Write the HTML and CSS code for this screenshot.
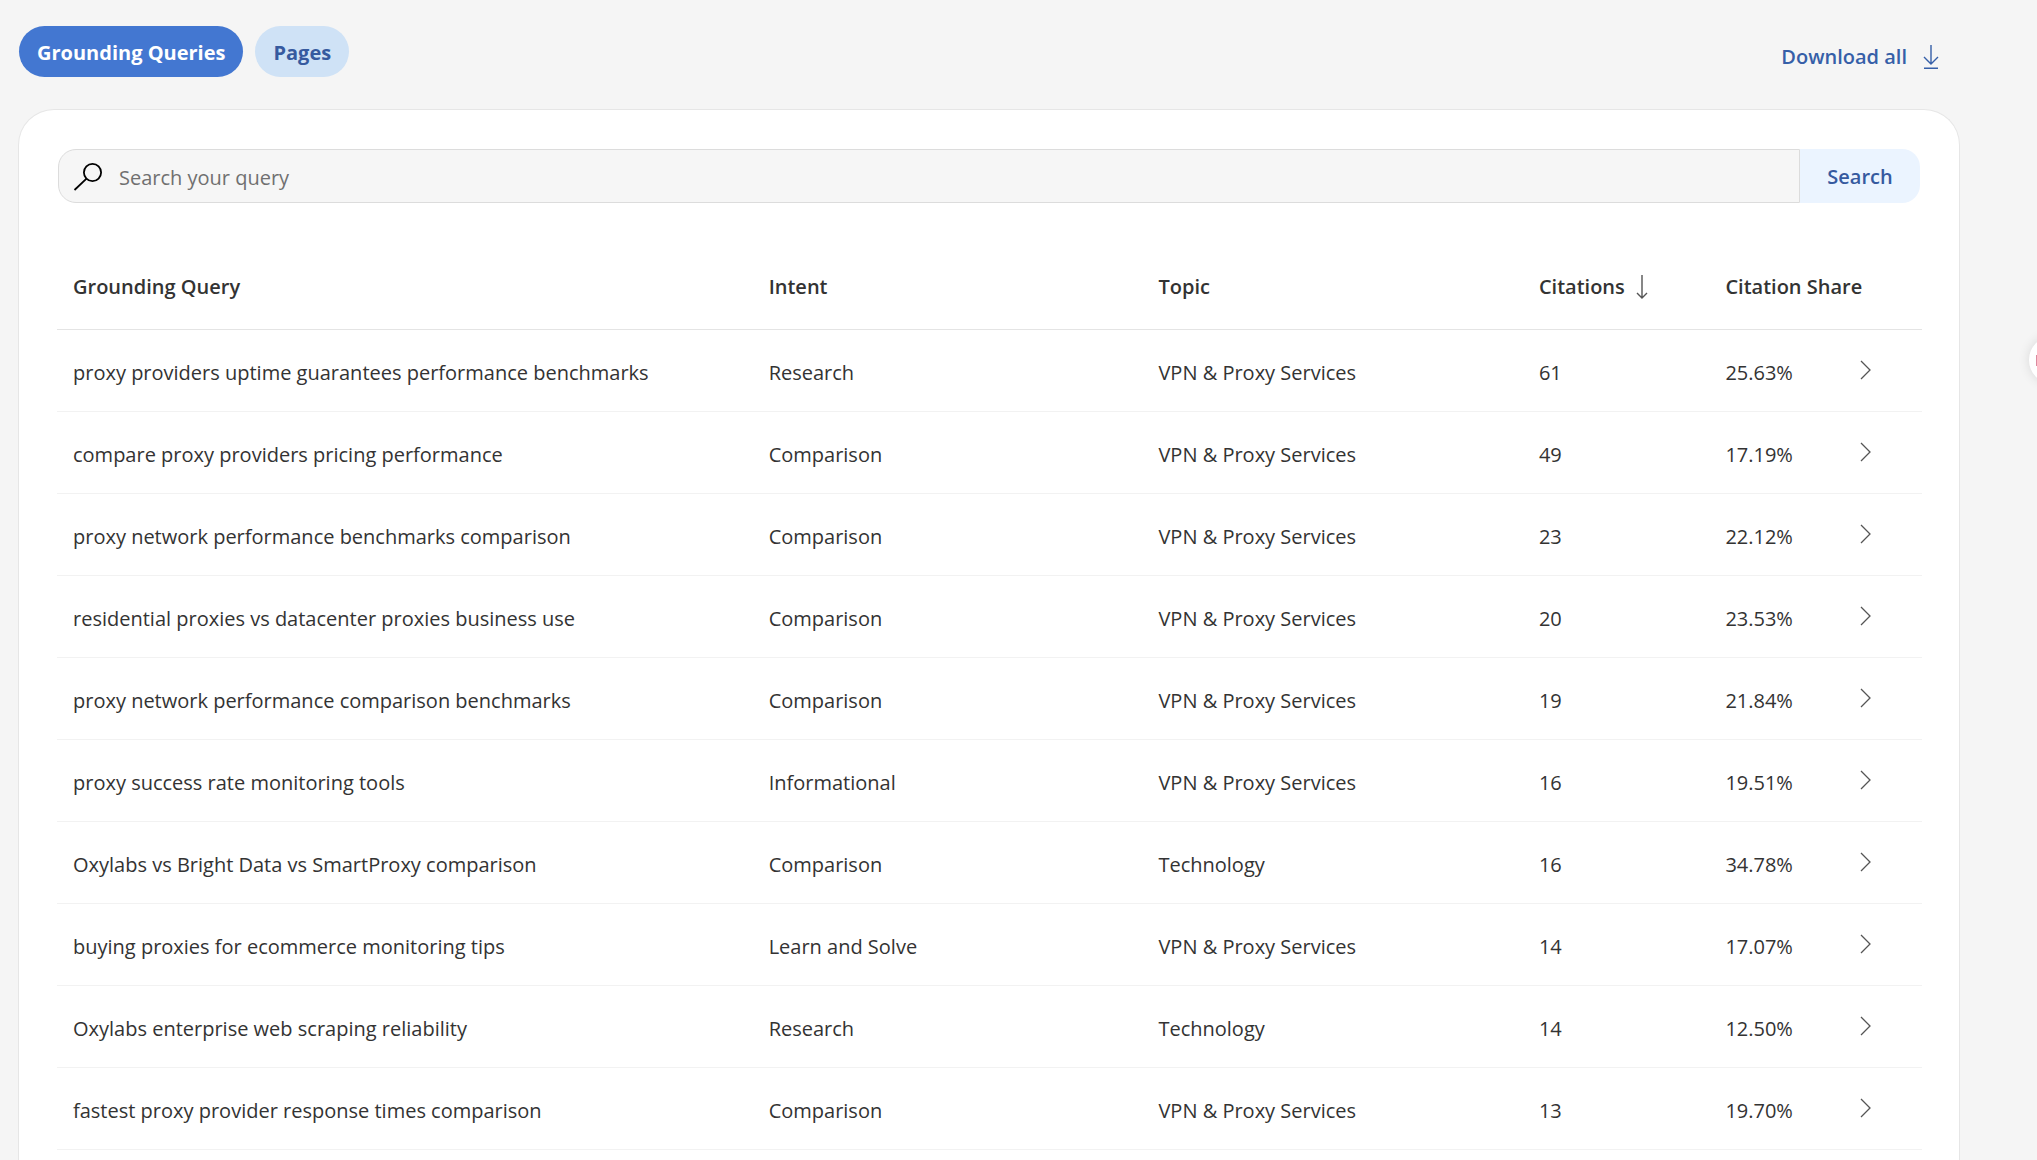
FILE: index.html
```html
<!DOCTYPE html>
<html lang="en">
<head>
    <meta charset="UTF-8">
    <meta name="viewport" content="width=device-width, initial-scale=1.0">
    <title>Grounding Queries</title>
    <link rel="stylesheet" href="styles.css">
</head>
<body>
    <svg class="sprite" aria-hidden="true">
        <symbol id="chevron" viewBox="0 0 12 20">
            <path d="M1 1l9 9-9 9" fill="none" stroke="currentColor" stroke-width="1.3"/>
        </symbol>
    </svg>

    <header class="toolbar">
        <nav class="tabs">
            <button class="tab active" type="button">Grounding Queries</button>
            <button class="tab" type="button">Pages</button>
        </nav>
        <a class="download" href="#">
            Download all
            <svg width="16" height="26" viewBox="0 0 16 26" fill="none" stroke="currentColor" stroke-width="1.4">
                <path d="M8 1v19M1 13l7 7 7-7M1 24.300h14"/>
            </svg>
        </a>
    </header>

    <main class="card">
        <form class="search">
            <label class="search-box" for="queryInput">
                <svg width="30" height="30" viewBox="0 0 30 30" fill="none" stroke="#000" stroke-width="1.8" role="img" aria-label="Query">
                    <circle cx="19.500" cy="11.500" r="8.600"/>
                    <path d="M13.500 17.700L1.500 29"/>
                </svg>
                <input id="queryInput" type="text" placeholder="Search your query">
            </label>
            <button class="search-btn" type="submit">Search</button>
        </form>

        <table class="queries">
            <colgroup>
                <col class="col-query">
                <col class="col-intent">
                <col class="col-topic">
                <col class="col-citations">
                <col class="col-share">
                <col>
            </colgroup>
            <thead>
                <tr>
                    <th>Grounding Query</th>
                    <th>Intent</th>
                    <th>Topic</th>
                    <th>
                        <button class="sort" type="button">
                            Citations
                            <svg width="12" height="26" viewBox="0 0 12 26" fill="none" stroke="currentColor" stroke-width="1.4">
                                <path d="M6 1v23M1 19l5 5 5-5"/>
                            </svg>
                        </button>
                    </th>
                    <th>Citation Share</th>
                    <th></th>
                </tr>
            </thead>
            <tbody>
                <tr>
                    <td>proxy providers uptime guarantees performance benchmarks</td>
                    <td>Research</td>
                    <td>VPN &amp; Proxy Services</td>
                    <td>61</td>
                    <td>25.63%</td>
                    <td><button class="open" type="button" aria-label="Open"><svg><use href="#chevron"/></svg></button></td>
                </tr>
                <tr>
                    <td>compare proxy providers pricing performance</td>
                    <td>Comparison</td>
                    <td>VPN &amp; Proxy Services</td>
                    <td>49</td>
                    <td>17.19%</td>
                    <td><button class="open" type="button" aria-label="Open"><svg><use href="#chevron"/></svg></button></td>
                </tr>
                <tr>
                    <td>proxy network performance benchmarks comparison</td>
                    <td>Comparison</td>
                    <td>VPN &amp; Proxy Services</td>
                    <td>23</td>
                    <td>22.12%</td>
                    <td><button class="open" type="button" aria-label="Open"><svg><use href="#chevron"/></svg></button></td>
                </tr>
                <tr>
                    <td>residential proxies vs datacenter proxies business use</td>
                    <td>Comparison</td>
                    <td>VPN &amp; Proxy Services</td>
                    <td>20</td>
                    <td>23.53%</td>
                    <td><button class="open" type="button" aria-label="Open"><svg><use href="#chevron"/></svg></button></td>
                </tr>
                <tr>
                    <td>proxy network performance comparison benchmarks</td>
                    <td>Comparison</td>
                    <td>VPN &amp; Proxy Services</td>
                    <td>19</td>
                    <td>21.84%</td>
                    <td><button class="open" type="button" aria-label="Open"><svg><use href="#chevron"/></svg></button></td>
                </tr>
                <tr>
                    <td>proxy success rate monitoring tools</td>
                    <td>Informational</td>
                    <td>VPN &amp; Proxy Services</td>
                    <td>16</td>
                    <td>19.51%</td>
                    <td><button class="open" type="button" aria-label="Open"><svg><use href="#chevron"/></svg></button></td>
                </tr>
                <tr>
                    <td>Oxylabs vs Bright Data vs SmartProxy comparison</td>
                    <td>Comparison</td>
                    <td>Technology</td>
                    <td>16</td>
                    <td>34.78%</td>
                    <td><button class="open" type="button" aria-label="Open"><svg><use href="#chevron"/></svg></button></td>
                </tr>
                <tr>
                    <td>buying proxies for ecommerce monitoring tips</td>
                    <td>Learn and Solve</td>
                    <td>VPN &amp; Proxy Services</td>
                    <td>14</td>
                    <td>17.07%</td>
                    <td><button class="open" type="button" aria-label="Open"><svg><use href="#chevron"/></svg></button></td>
                </tr>
                <tr>
                    <td>Oxylabs enterprise web scraping reliability</td>
                    <td>Research</td>
                    <td>Technology</td>
                    <td>14</td>
                    <td>12.50%</td>
                    <td><button class="open" type="button" aria-label="Open"><svg><use href="#chevron"/></svg></button></td>
                </tr>
                <tr>
                    <td>fastest proxy provider response times comparison</td>
                    <td>Comparison</td>
                    <td>VPN &amp; Proxy Services</td>
                    <td>13</td>
                    <td>19.70%</td>
                    <td><button class="open" type="button" aria-label="Open"><svg><use href="#chevron"/></svg></button></td>
                </tr>
            </tbody>
        </table>
    </main>

    <!-- floating widget, mostly off the right edge -->
    <button class="widget" type="button" aria-label="Assistant"><span></span></button>
</body>
</html>
```
FILE: styles.css
```css
* {
    box-sizing: border-box;
}

body {
    margin: 0;
    padding: 26px 77px 0 18px;
    min-height: 100vh;
    background-color: #f5f5f5;
    color: #333;
    font-family: "Segoe UI", "Open Sans", "Noto Sans", sans-serif;
    font-size: 20px;
    line-height: 28px;
    overflow: hidden;
}

button, input {
    font: inherit;
    color: inherit;
    border: 0;
    background: none;
    padding: 0;
}

button {
    cursor: pointer;
}

svg {
    flex: none;
}

.sprite {
    position: absolute;
    width: 0;
    height: 0;
}

.toolbar {
    display: flex;
    justify-content: space-between;
    align-items: flex-start;
    margin-bottom: 32px;
    padding: 0 21px 0 1px;
}

.tabs {
    display: flex;
    gap: 12px;
}

.tab {
    height: 51px;
    padding: 3px 18px 0;
    border-radius: 26px;
    background-color: #cfe2f6;
    color: #365a9f;
    font-weight: 700;
}

.tab.active {
    background-color: #4377d1;
    color: #fff;
}

.download {
    display: flex;
    align-items: center;
    gap: 16px;
    padding-top: 17px;
    color: #365fa8;
    font-weight: 600;
    text-decoration: none;
}

.card {
    min-height: calc(100vh - 109px);
    padding: 39px 37px 0 38px;
    border: 1px solid #e6e6e6;
    border-bottom: 0;
    border-radius: 36px 36px 0 0;
    background-color: #fff;
}

.search {
    display: flex;
    height: 54px;
    margin: 0 2px 0 1px;
}

.search-box {
    display: flex;
    align-items: center;
    flex: 1;
    gap: 16px;
    padding-left: 14px;
    border: 1px solid #dcdcdc;
    border-radius: 18px 0 0 18px;
    background-color: #f6f6f6;
}

.search-box input {
    flex: 1;
    min-width: 0;
    height: 100%;
    padding-top: 2px;
    outline: none;
}

.search-box input::placeholder {
    color: #707070;
    opacity: 1;
}

.search-btn {
    width: 120px;
    padding-top: 2px;
    border-radius: 0 18px 18px 0;
    background-color: #ebf4ff;
    color: #365a9f;
    font-weight: 600;
}

.queries {
    width: 100%;
    margin-top: 42px;
    border-collapse: collapse;
    table-layout: fixed;
}

.col-query {
    width: 37.3%;
}

.col-intent {
    width: 20.9%;
}

.col-topic {
    width: 20.4%;
}

.col-citations {
    width: 10%;
}

.col-share {
    width: 8.1%;
}

th, td {
    padding: 0 0 0 16px;
    text-align: left;
    white-space: nowrap;
}

th {
    height: 84px;
    border-bottom: 1px solid #e4e4e4;
    font-weight: 600;
}

td {
    height: 82px;
    padding-top: 5px;
    border-bottom: 1px solid #f2f2f2;
}

.sort {
    display: flex;
    align-items: center;
    gap: 11px;
    font-weight: 600;
}

.sort svg {
    color: #555;
}

td:last-child {
    padding: 0;
}

.open {
    display: block;
    padding-right: 8px;
    color: #555;
}

.open svg {
    display: block;
    width: 12px;
    height: 20px;
}

.widget {
    position: fixed;
    top: 336px;
    right: -40px;
    display: flex;
    align-items: center;
    width: 48px;
    height: 48px;
    padding-left: 7px;
    border-radius: 50%;
    background-color: #fff;
    box-shadow: 0 0 12px rgba(0, 0, 0, 0.12);
}

.widget span {
    width: 24px;
    height: 11px;
    background-color: #dc8ba0;
}
```
